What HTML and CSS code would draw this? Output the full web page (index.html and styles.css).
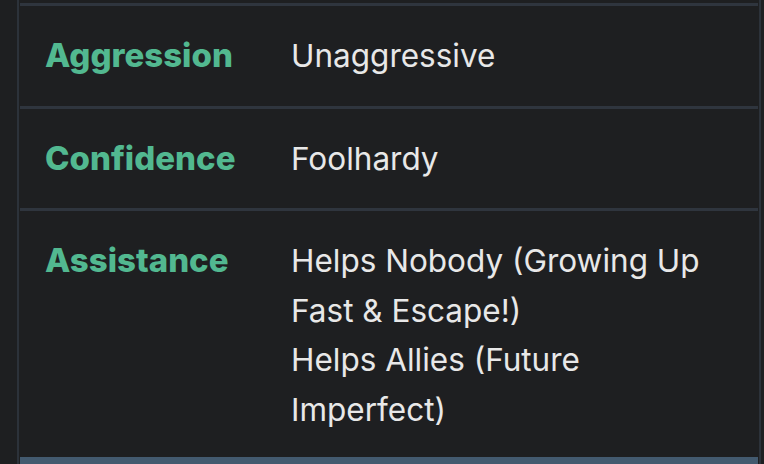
FILE: index.html
```html
<!DOCTYPE html>
<html lang="en">
<head>
<meta charset="utf-8">
<title>Traits</title>
<link rel="stylesheet" href="styles.css">
</head>
<body>
<div class="frame">
  <div class="row">
    <div class="label">Aggression</div>
    <div class="value">Unaggressive</div>
  </div>
  <div class="row">
    <div class="label">Confidence</div>
    <div class="value">Foolhardy</div>
  </div>
  <div class="row">
    <div class="label">Assistance</div>
    <div class="value">Helps Nobody (Growing Up Fast &amp; Escape!)<br>Helps Allies (Future Imperfect)</div>
  </div>
  <div class="next"></div>
</div>
</body>
</html>
```
FILE: styles.css
```css
html, body {
  margin: 0;
  padding: 0;
  background: #1e1f21;
  height: 100%;
  overflow: hidden;
}

body {
  font-family: Inter, "Noto Sans", sans-serif;
  color: #e8e8e8;
}

.frame {
  box-sizing: border-box;
  margin-left: 17px;
  width: 744px;
  height: 464px;
  padding: 3px 1px 0;
  border-left: 2px solid #2c323a;
  border-right: 2px solid #2c323a;
}

.row {
  display: grid;
  grid-template-columns: 271px 1fr;
  border-top: 3px solid #2f353e;
  padding: 25px 25px 25px 0;
  line-height: 49.5px;
}

.row:nth-child(3) {
  padding-bottom: 23px;
}

.label {
  padding-left: 25px;
  color: #52b890;
  font-size: 33px;
  font-weight: 800;
}

.value {
  font-size: 31.5px;
  font-weight: 400;
}

.next {
  height: 20px;
  background: #435a6f;
}
```
